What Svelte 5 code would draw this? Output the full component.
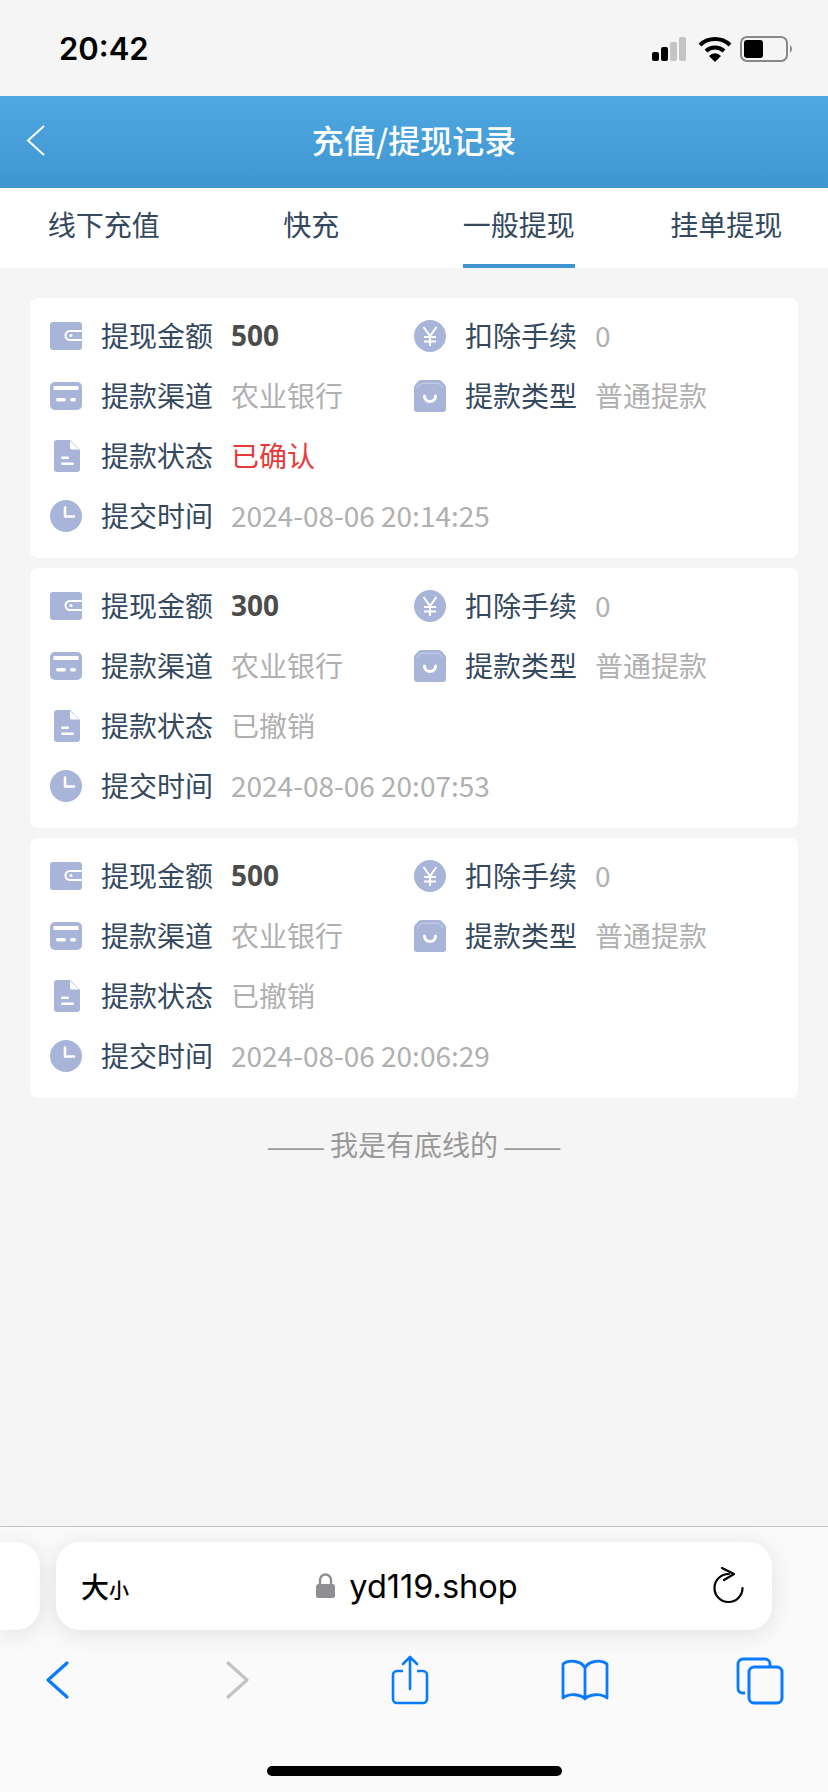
<script>
  const tabs = ["线下充值", "快充", "一般提现", "挂单提现"];
  const records = [
    { amount: "500", fee: "0", status: "已确认", done: true, time: "2024-08-06 20:14:25" },
    { amount: "300", fee: "0", status: "已撤销", done: false, time: "2024-08-06 20:07:53" },
    { amount: "500", fee: "0", status: "已撤销", done: false, time: "2024-08-06 20:06:29" },
  ];
</script>

<div class="page">
  <div class="status">
    <span class="clock">20:42</span>
    <div class="status-icons">
      <svg width="34" height="26" viewBox="0 0 34 26">
        <rect x="0" y="16" width="7" height="9" rx="2" fill="#000" />
        <rect x="9" y="11" width="7" height="14" rx="2" fill="#000" />
        <rect x="18" y="6" width="7" height="19" rx="2" fill="#c4c4c4" />
        <rect x="27" y="1" width="7" height="24" rx="2" fill="#c4c4c4" />
      </svg>
      <svg class="wifi" width="34" height="26" viewBox="0 0 34 26">
        <path d="M2 9 A22 22 0 0 1 32 9" fill="none" stroke="#000" stroke-width="4" />
        <path d="M8 15 A13 13 0 0 1 26 15" fill="none" stroke="#000" stroke-width="4" />
        <path d="M17 26 L11 20 A8 8 0 0 1 23 20 Z" fill="#000" />
      </svg>
      <svg class="battery" width="54" height="26" viewBox="0 0 54 26">
        <rect x="1" y="1" width="46" height="24" rx="6" fill="none" stroke="#888" stroke-width="2" />
        <rect x="4" y="4" width="19" height="18" rx="3" fill="#000" />
        <path d="M50 9 A5 5 0 0 1 50 17 Z" fill="#888" />
      </svg>
    </div>
  </div>

  <header>
    <svg class="back" width="20" height="32" viewBox="0 0 20 32">
      <path d="M19 1 L3 15.500 L19 30" fill="none" stroke="#fff" stroke-width="2" />
    </svg>
    <h1>充值/提现记录</h1>
  </header>

  <nav>
    {#each tabs as tab, i}
      <div class="tab"><span class:active={i === 2}>{tab}</span></div>
    {/each}
  </nav>

  <main>
    {#each records as r}
      <section class="card">
        <div class="row">
          <div class="cell">
            <svg class="ic" viewBox="0 0 32 32">
              <rect y="2" width="32" height="28" rx="3" />
              <path d="M32 11 H20 A4.500 4.500 0 0 0 20 20 H32" fill="none" stroke="#fff" stroke-width="2" />
              <circle cx="21" cy="15.500" r="1.600" fill="#fff" />
            </svg>
            <span class="label">提现金额</span>
            <b class="amount">{r.amount}</b>
          </div>
          <div class="cell">
            <svg class="ic" viewBox="0 0 32 32">
              <circle cx="16" cy="16" r="16" />
              <path d="M9.500 7 L16 16 L22.500 7 M16 16 V26 M10 17 H22 M10 21.500 H22" fill="none" stroke="#fff" stroke-width="2" />
            </svg>
            <span class="label">扣除手续</span>
            <span class="val">{r.fee}</span>
          </div>
        </div>
        <div class="row">
          <div class="cell">
            <svg class="ic" viewBox="0 0 32 32">
              <rect y="2" width="32" height="28" rx="5" />
              <rect x="3.500" y="6" width="25" height="4" fill="#fff" />
              <rect x="6" y="18" width="10" height="3.500" rx="1.700" fill="#fff" />
              <rect x="20" y="18" width="6" height="3.500" rx="1.700" fill="#fff" />
            </svg>
            <span class="label">提款渠道</span>
            <span class="val">农业银行</span>
          </div>
          <div class="cell">
            <svg class="ic" viewBox="0 0 32 32">
              <path d="M7 0 H25 A4 4 0 0 1 28 1.500 L31 5 A4 4 0 0 1 32 8 V29 A3 3 0 0 1 29 32 H3 A3 3 0 0 1 0 29 V8 A4 4 0 0 1 1 5 L4 1.500 A4 4 0 0 1 7 0 Z" />
              <path d="M2.500 8 L7.500 3.300 H24.500 L29.500 8" fill="none" stroke="#fff" stroke-width="1" opacity="0.4" />
              <path d="M10.500 16 A5.500 5.500 0 0 0 21.500 16" fill="none" stroke="#fff" stroke-width="3" stroke-linecap="round" />
            </svg>
            <span class="label">提款类型</span>
            <span class="val">普通提款</span>
          </div>
        </div>
        <div class="row">
          <div class="cell">
            <svg class="ic" viewBox="0 0 32 32">
              <path d="M7 0 H20 L30 10 V29 A3 3 0 0 1 27 32 H7 A3 3 0 0 1 4 29 V3 A3 3 0 0 1 7 0 Z" />
              <path d="M20 1 V8 Q20 9.500 21.500 9.500 H29 Z" fill="#fff" />
              <rect x="11" y="16.500" width="8" height="2.500" rx="1.200" fill="#fff" />
              <rect x="11" y="22.500" width="13" height="2.500" rx="1.200" fill="#fff" />
            </svg>
            <span class="label">提款状态</span>
            <span class="val" class:red={r.done}>{r.status}</span>
          </div>
        </div>
        <div class="row">
          <div class="cell">
            <svg class="ic" viewBox="0 0 32 32">
              <circle cx="16" cy="16" r="16" />
              <path d="M15 7.500 V16.500 H24" fill="none" stroke="#fff" stroke-width="2.600" stroke-linecap="round" stroke-linejoin="round" />
            </svg>
            <span class="label">提交时间</span>
            <span class="val">{r.time}</span>
          </div>
        </div>
      </section>
    {/each}
    <p class="end"><span class="dash">——</span> 我是有底线的 <span class="dash">——</span></p>
  </main>

  <div class="safari">
    <div class="url-row">
      <div class="prev"></div>
      <div class="url">
        <span class="aa">大<small>小</small></span>
        <div class="host">
          <svg width="19" height="26" viewBox="0 0 19 26">
            <path d="M4 12 V7 A5.500 5.500 0 0 1 15 7 V12" fill="none" stroke="#8e8e93" stroke-width="2.400" />
            <rect y="11" width="19" height="14" rx="2.500" fill="#8e8e93" />
          </svg>
          <span>yd119.shop</span>
        </div>
        <svg width="32" height="38" viewBox="0 0 32 38">
          <path d="M16 7 A14 14 0 1 0 29.500 21" fill="none" stroke="#000" stroke-width="2.200" stroke-linecap="round" />
          <path d="M9 1 L21 7 L11 13" fill="none" stroke="#000" stroke-width="2.200" stroke-linecap="round" stroke-linejoin="round" />
        </svg>
      </div>
    </div>
    <div class="tools">
      <svg viewBox="0 0 60 52">
        <path d="M40 9 L21 26 L40 43" fill="none" stroke="#0a7aff" stroke-width="3.200" stroke-linecap="round" stroke-linejoin="round" />
      </svg>
      <svg viewBox="0 0 60 52">
        <path d="M21 9 L40 26 L21 43" fill="none" stroke="#c2c2c2" stroke-width="3.200" stroke-linecap="round" stroke-linejoin="round" />
      </svg>
      <svg viewBox="0 0 60 52">
        <path d="M23 17 H17 A4 4 0 0 0 13 21 V45 A4 4 0 0 0 17 49 H43 A4 4 0 0 0 47 45 V21 A4 4 0 0 0 43 17 H37" fill="none" stroke="#0a7aff" stroke-width="2.600" />
        <path d="M30 35 V3 M23 10 L30 3 L37 10" fill="none" stroke="#0a7aff" stroke-width="2.600" stroke-linecap="round" stroke-linejoin="round" />
      </svg>
      <svg viewBox="0 0 60 52">
        <path d="M30 14 C27 7 14 5 8 10 V44 C14 39 26 40 30 45 C34 40 46 39 52 44 V10 C46 5 33 7 30 14 Z M30 14 V45" fill="none" stroke="#0a7aff" stroke-width="2.800" stroke-linejoin="round" />
      </svg>
      <svg viewBox="0 0 60 52">
        <path d="M15 39 H12 A5 5 0 0 1 8 34 V10 A5 5 0 0 1 13 5 H35 A5 5 0 0 1 40 10 V12" fill="none" stroke="#0a7aff" stroke-width="2.800" />
        <rect x="19" y="13" width="33" height="36" rx="5" fill="none" stroke="#0a7aff" stroke-width="3" />
      </svg>
    </div>
    <div class="home"></div>
  </div>
</div>

<style>
  :global(body) {
    margin: 0;
    background: #f5f5f5;
    font-family: "Noto Sans CJK SC", "Noto Sans", sans-serif;
  }
  .page {
    width: 828px;
    height: 1792px;
    display: flex;
    flex-direction: column;
    overflow: hidden;
  }
  .status {
    height: 96px;
    box-sizing: border-box;
    padding: 0 34px 0 59px;
    display: flex;
    align-items: center;
    justify-content: space-between;
  }
  .clock {
    font-family: Inter, sans-serif;
    font-weight: 600;
    font-size: 31px;
    color: #000;
  }
  .status-icons {
    display: flex;
    align-items: center;
    margin-top: 2px;
  }
  .wifi {
    margin-left: 12px;
  }
  .battery {
    margin-left: 8px;
  }
  header {
    height: 92px;
    background: linear-gradient(#4fa8e2, #3f95cf);
    display: flex;
    align-items: center;
    justify-content: center;
    position: relative;
  }
  .back {
    position: absolute;
    left: 25px;
    top: 29px;
  }
  h1 {
    margin: 0 0 6px;
    font-size: 32px;
    font-weight: 500;
    color: #fff;
  }
  nav {
    height: 80px;
    background: #fff;
    display: grid;
    grid-template-columns: repeat(4, 207.500px);
  }
  .tab {
    display: flex;
    justify-content: center;
    font-size: 28px;
    color: #34495e;
  }
  .tab span {
    height: 80px;
    box-sizing: border-box;
    line-height: 72px;
  }
  .tab span.active {
    border-bottom: 4px solid #3f95cf;
  }
  main {
    flex: 1;
    padding: 30px 30px 0;
    display: flex;
    flex-direction: column;
    gap: 10px;
  }
  .card {
    background: #fff;
    border-radius: 8px;
    height: 260px;
    box-sizing: border-box;
    padding: 8px 20px 12px;
  }
  .row {
    height: 60px;
    display: grid;
    grid-template-columns: 364px 1fr;
  }
  .cell {
    display: flex;
    align-items: center;
  }
  .ic {
    width: 32px;
    height: 32px;
    fill: #a8b5d9;
    flex: none;
  }
  .label {
    margin: 0 0 2px 19px;
    width: 130px;
    flex: none;
    font-size: 28px;
    color: #34495e;
    white-space: nowrap;
  }
  .val {
    margin-bottom: 2px;
    font-size: 28px;
    color: #b0b0b0;
    white-space: nowrap;
  }
  .val.red {
    color: #e83a3a;
  }
  .amount {
    margin-bottom: 2px;
    font-family: "Open Sans", sans-serif;
    font-size: 28px;
    font-weight: 700;
    color: #4c4c4c;
  }
  .end {
    margin: 18px 0 0;
    text-align: center;
    font-size: 28px;
    line-height: 36px;
    color: #999;
  }
  .dash {
    font-family: "Liberation Sans", sans-serif;
  }
  .safari {
    height: 266px;
    box-sizing: border-box;
    background: #fafafa;
    border-top: 1px solid #c6c6c6;
  }
  .url-row {
    margin-top: 15px;
    display: flex;
    gap: 16px;
    height: 88px;
  }
  .prev {
    width: 40px;
    background: #fff;
    border-radius: 0 24px 24px 0;
    box-shadow: 0 4px 24px rgba(0, 0, 0, 0.1);
  }
  .url {
    width: 716px;
    box-sizing: border-box;
    padding: 0 27px 0 25px;
    background: #fff;
    border-radius: 24px;
    box-shadow: 0 4px 24px rgba(0, 0, 0, 0.1);
    display: flex;
    align-items: center;
    justify-content: space-between;
  }
  .aa {
    font-size: 28px;
    font-weight: 500;
    color: #000;
  }
  .aa small {
    font-size: 20px;
  }
  .host {
    display: flex;
    align-items: center;
    gap: 14px;
    margin-right: 8px;
    font-family: Inter, sans-serif;
    font-size: 32.500px;
    color: #000;
  }
  .tools {
    margin-top: 24px;
    padding-left: 27px;
    display: grid;
    grid-template-columns: 180px 173px 175px 175px 60px;
    height: 52px;
  }
  .tools svg {
    width: 60px;
    height: 52px;
  }
  .home {
    width: 295px;
    height: 10px;
    margin: 60px auto 0;
    background: #000;
    border-radius: 5px;
  }
</style>
